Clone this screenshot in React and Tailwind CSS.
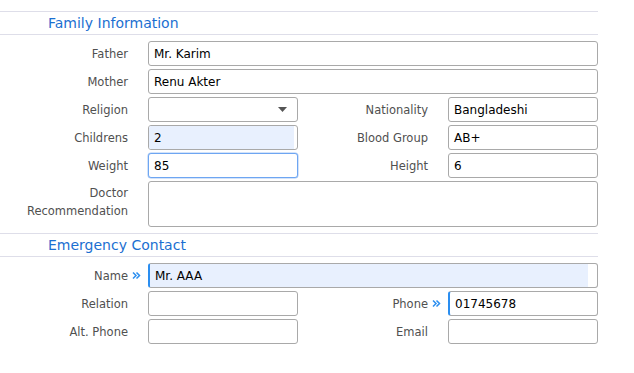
import React from "react";

const font = { fontFamily: '"DejaVu Sans", Verdana, sans-serif' };

function Label({ children, className = "" }) {
  return (
    <div className={`text-[11.5px] leading-[18px] text-[#505050] text-right ${className}`}>
      {children}
    </div>
  );
}

function Chevrons() {
  return (
    <svg width="9" height="9" viewBox="0 0 9 9" className="shrink-0">
      <path d="M1 1.5 L4 4.5 L1 7.5 M4.5 1.5 L7.5 4.5 L4.5 7.5" fill="none" stroke="#2b8ef0" strokeWidth="1.5" />
    </svg>
  );
}

function Input({ value = "", className = "", inner = "" }) {
  return (
    <div className={`h-[25px] rounded-[3px] border border-[#a9a9a9] bg-white flex items-stretch overflow-hidden ${className}`}>
      <div className={`flex-1 flex items-center pl-[5px] text-[12px] text-black ${inner}`}>{value}</div>
    </div>
  );
}

function SectionHeader({ title }) {
  return (
    <div className="w-[598px] border-t border-b border-[#dedee9] h-[24px] flex items-center pl-[48px]">
      <span className="text-[14px] text-[#1b6fd1]">{title}</span>
    </div>
  );
}

function Row({ children }) {
  return <div className="flex items-center h-[25px]">{children}</div>;
}

export default function App() {
  return (
    <div className="w-[634px] h-[373px] bg-white pt-[11px]" style={font}>
      <SectionHeader title="Family Information" />
      <div className="flex flex-col gap-[3px] pt-[6px]">
        <Row>
          <Label className="w-[128px]">Father</Label>
          <Input value="Mr. Karim" className="ml-[20px] w-[450px]" />
        </Row>
        <Row>
          <Label className="w-[128px]">Mother</Label>
          <Input value="Renu Akter" className="ml-[20px] w-[450px]" />
        </Row>
        <Row>
          <Label className="w-[128px]">Religion</Label>
          <div className="ml-[20px] w-[150px] h-[25px] rounded-[3px] border border-[#a9a9a9] bg-white flex items-center justify-end pr-[10px]">
            <svg width="9" height="5" viewBox="0 0 9 5">
              <path d="M0 0 H9 L4.5 5 Z" fill="#555" />
            </svg>
          </div>
          <Label className="w-[130px]">Nationality</Label>
          <Input value="Bangladeshi" className="ml-[20px] w-[150px]" />
        </Row>
        <Row>
          <Label className="w-[128px]">Childrens</Label>
          <Input value="2" className="ml-[20px] w-[150px]" inner="bg-[#e8f0fe] mr-[3px]" />
          <Label className="w-[130px]">Blood Group</Label>
          <Input value="AB+" className="ml-[20px] w-[150px]" />
        </Row>
        <Row>
          <Label className="w-[128px]">Weight</Label>
          <Input value="85" className="ml-[20px] w-[150px] !border-[#6ea6f2] ring-[0.5px] ring-[#a8c8f5]" />
          <Label className="w-[130px]">Height</Label>
          <Input value="6" className="ml-[20px] w-[150px]" />
        </Row>
        <div className="flex items-start">
          <Label className="w-[128px] pt-[3px]">
            Doctor
            <br />
            Recommendation
          </Label>
          <div className="ml-[20px] w-[450px] h-[46px] rounded-[3px] border border-[#a9a9a9] bg-white" />
        </div>
      </div>
      <div className="pt-[6px]">
        <SectionHeader title="Emergency Contact" />
      </div>
      <div className="flex flex-col gap-[3px] pt-[6px]">
        <Row>
          <Label className="w-[128px]">Name</Label>
          <div className="w-[20px] flex justify-center pr-[4px]">
            <Chevrons />
          </div>
          <Input value="Mr. AAA" className="w-[450px] !border-l-2 !border-l-[#2b8ef0]" inner="bg-[#e8f0fe] mr-[9px] pl-[4px]" />
        </Row>
        <Row>
          <Label className="w-[128px]">Relation</Label>
          <Input className="ml-[20px] w-[150px]" />
          <Label className="w-[130px]">Phone</Label>
          <div className="w-[20px] flex justify-center pr-[4px]">
            <Chevrons />
          </div>
          <Input value="01745678" className="w-[150px] !border-l-2 !border-l-[#2b8ef0]" inner="pl-[4px]" />
        </Row>
        <Row>
          <Label className="w-[128px]">Alt. Phone</Label>
          <Input className="ml-[20px] w-[150px]" />
          <Label className="w-[130px]">Email</Label>
          <Input className="ml-[20px] w-[150px]" />
        </Row>
      </div>
    </div>
  );
}
